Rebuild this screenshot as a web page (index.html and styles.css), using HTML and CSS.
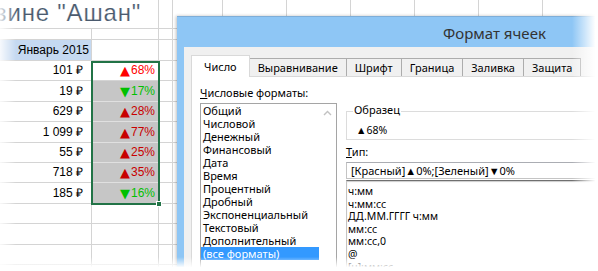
FILE: index.html
```html
<!DOCTYPE html>
<html lang="ru">
<head>
<meta charset="utf-8">
<title>Формат ячеек</title>
<link rel="stylesheet" href="styles.css">
</head>
<body>
<div class="page">
  <div class="sheet">
    <div class="row r-title">
      <div class="cell ab title"><span>магазине "Ашан"</span></div>
      <div class="cell c"></div><div class="cell d"></div>
      <div class="cell w"></div><div class="cell w"></div><div class="cell w"></div>
      <div class="cell w"></div><div class="cell w"></div><div class="cell w"></div>
    </div>
    <div class="row r-gap"><div class="cell a"></div><div class="cell b"></div><div class="cell c"></div><div class="cell d"></div></div>
    <div class="row r-head"><div class="cell a hdr">Январь 2015</div><div class="cell b"></div><div class="cell c"></div><div class="cell d"></div></div>
    <div class="row"><div class="cell a">101 ₽</div><div class="cell b up"><span class="tri">▲</span>68%</div><div class="cell c"></div><div class="cell d"></div></div>
    <div class="row"><div class="cell a">19 ₽</div><div class="cell b hl dn"><span class="tri">▼</span>17%</div><div class="cell c"></div><div class="cell d"></div></div>
    <div class="row"><div class="cell a">629 ₽</div><div class="cell b hl up"><span class="tri">▲</span>28%</div><div class="cell c"></div><div class="cell d"></div></div>
    <div class="row"><div class="cell a">1 099 ₽</div><div class="cell b hl up"><span class="tri">▲</span>77%</div><div class="cell c"></div><div class="cell d"></div></div>
    <div class="row"><div class="cell a">55 ₽</div><div class="cell b hl up"><span class="tri">▲</span>25%</div><div class="cell c"></div><div class="cell d"></div></div>
    <div class="row"><div class="cell a">718 ₽</div><div class="cell b hl up"><span class="tri">▲</span>35%</div><div class="cell c"></div><div class="cell d"></div></div>
    <div class="row"><div class="cell a">185 ₽</div><div class="cell b hl dn"><span class="tri">▼</span>16%</div><div class="cell c"></div><div class="cell d"></div></div>
    <div class="row"><div class="cell a"></div><div class="cell b"></div><div class="cell c"></div><div class="cell d"></div></div>
    <div class="row"><div class="cell a"></div><div class="cell b"></div><div class="cell c"></div><div class="cell d"></div></div>
    <div class="row"><div class="cell a"></div><div class="cell b"></div><div class="cell c"></div><div class="cell d"></div></div>
    <div class="row"><div class="cell a"></div><div class="cell b"></div><div class="cell c"></div><div class="cell d"></div></div>
  </div>

  <div class="selbox"><span class="handle"></span></div>

  <div class="dialog">
    <div class="titlebar">Формат ячеек</div>
    <div class="dbody">
      <div class="tabs">
        <div class="tab on">Число</div>
        <div class="tab">Выравнивание</div>
        <div class="tab">Шрифт</div>
        <div class="tab">Граница</div>
        <div class="tab">Заливка</div>
        <div class="tab">Защита</div>
      </div>
      <div class="panel">
        <div class="fmts">
          <div class="lbl"><u>Ч</u>исловые форматы:</div>
          <div class="list">
            <div class="items">
              <div>Общий</div>
              <div>Числовой</div>
              <div>Денежный</div>
              <div>Финансовый</div>
              <div>Дата</div>
              <div>Время</div>
              <div>Процентный</div>
              <div>Дробный</div>
              <div>Экспоненциальный</div>
              <div>Текстовый</div>
              <div>Дополнительный</div>
              <div class="sel">(все форматы)</div>
            </div>
            <div class="scroll">
              <svg width="9" height="6" viewBox="0 0 9 6"><polyline points="1,5 4.5,1.5 8,5" fill="none" stroke="#c2c2c2" stroke-width="1.4"/></svg>
            </div>
          </div>
        </div>
        <div class="rt">
          <div class="sample">
            <span class="legend">Образец</span>
            <div class="sval">▲68%</div>
          </div>
          <div class="lbl2"><u>Т</u>ип:</div>
          <div class="input">[Красный]▲0%;[Зеленый]▼0%</div>
          <div class="types">
            <div>ч:мм</div>
            <div>ч:мм:сс</div>
            <div>ДД.ММ.ГГГГ ч:мм</div>
            <div>мм:сс</div>
            <div>мм:сс,0</div>
            <div>@</div>
            <div>[ч]:мм:сс</div>
          </div>
        </div>
      </div>
    </div>
  </div>

  <div class="fade fade-l"></div>
  <div class="fade fade-r"></div>
  <div class="fade fade-b"></div>
</div>
</body>
</html>
```

FILE: styles.css
```css
* { box-sizing: border-box; margin: 0; padding: 0; }
html, body { width: 598px; height: 271px; overflow: hidden; background: #fff; }
.page { position: relative; width: 598px; height: 271px; overflow: hidden; }

.sheet { font-family: "Liberation Sans", Arial, sans-serif; font-size: 12px; color: #000; }
.row { display: flex; height: 20.4px; }
.cell {
  flex: none;
  border-right: 1px solid #d4d4d4;
  border-bottom: 1px solid #d4d4d4;
  display: flex;
  align-items: flex-end;
  justify-content: flex-end;
  padding-bottom: 2px;
  line-height: 15px;
  white-space: nowrap;
}
.a { width: 92px; padding-right: 8px; }
.b { width: 67px; padding-right: 3px; }
.c { width: 14px; }
.d { width: 50px; }
.w { width: 64px; }
.ab { width: 159px; }
.r-title { height: 29px; }
.title {
  font-size: 24px;
  letter-spacing: 0.8px;
  color: #4a5a6e;
  line-height: 26px;
  align-items: flex-start;
  padding: 0 17px 0 0;
  overflow: hidden;
  -webkit-text-stroke: 0.2px #fff;
}
.r-gap { height: 11px; }
.r-head { height: 21px; }
.hdr { background: #c5d9f1; padding-right: 2px; }
.hl { background: #c6c6c6; border-bottom-color: #e0e0e0; }
.tri { font-family: "DejaVu Sans", sans-serif; font-size: 13px; line-height: 15px; margin-right: 1px; }
.up { color: #ff0000; }
.hl.up { color: #c80000; }
.hl.dn { color: #00c000; }

.selbox {
  position: absolute;
  left: 91px; top: 61px;
  width: 69px; height: 144px;
  border: 2px solid #217346;
}
.handle {
  position: absolute;
  right: -4px; bottom: -4px;
  width: 6px; height: 6px;
  background: #217346;
  border: 1px solid #fff;
}

.dialog {
  position: absolute;
  left: 177px; top: 16px;
  width: 450px; height: 270px;
  background: #8ec6f5;
  border-top: 1px solid #7eaed8;
  box-shadow: -1px 0 3px rgba(0,0,0,.25);
  font-family: "Noto Sans", "Open Sans", sans-serif;
  font-size: 11px;
  color: #000;
  display: flex;
  flex-direction: column;
}
.titlebar {
  height: 30px;
  flex: none;
  padding: 2px 0 0 266px;
  display: flex;
  align-items: center;
  font-size: 15px;
  color: #333;
}
.dbody {
  flex: 1;
  margin-left: 7px;
  background: #f0f0f0;
  padding: 8px 0 0 7px;
  display: flex;
  flex-direction: column;
}
.tabs { display: flex; align-items: flex-end; height: 21px; flex: none; }
.tab {
  height: 18px;
  padding: 0 8px;
  border: 1px solid #acacac;
  border-bottom: 0;
  margin-right: -1px;
  background: #f0f0f0;
  display: flex;
  align-items: center;
  line-height: 16px;
  white-space: nowrap;
}
.tab.on {
  height: 22px;
  margin-bottom: -1px;
  padding: 1px 12px 0;
  background: #fff;
  border-color: #d9d9d9;
  position: relative;
  z-index: 1;
}
.panel {
  flex: 1;
  background: #fff;
  border: 1px solid #d9d9d9;
  display: flex;
  gap: 9px;
  padding: 8px 0 0 8px;
}
.fmts { width: 137px; flex: none; display: flex; flex-direction: column; }
.lbl { line-height: 16px; height: 16px; }
.list { margin-top: 2px; border: 1px solid #a5a5a5; display: flex; flex: 1; }
.items { flex: 1; }
.items div { line-height: 13px; padding-left: 2px; white-space: nowrap; }
.items .sel { background: #3399ff; color: #fff; }
.scroll { width: 17px; flex: none; display: flex; justify-content: center; align-items: flex-start; padding-top: 6px; }

.rt { flex: 1; display: flex; flex-direction: column; }
.sample { margin-top: 26px; height: 29px; border: 1px solid #dcdcdc; border-right: 0; flex: none; }
.legend {
  display: block;
  width: max-content;
  margin: -10px 0 0 6px;
  padding: 0 1px;
  background: #fff;
  line-height: 16px;
}
.sval { line-height: 14px; margin-top: 5px; padding-left: 9px; font-size: 10.5px; }
.lbl2 { margin-top: 4px; line-height: 16px; }
.input {
  margin-top: 2px;
  height: 17px;
  border: 1px solid #c4c4c4;
  border-top-color: #abadb3;
  border-right: 0;
  padding-left: 4px;
  line-height: 15px;
  white-space: nowrap;
  flex: none;
}
.types {
  margin-top: 1px;
  flex: 1;
  border-top: 1px solid #6f6f6f;
  border-left: 1px solid #c4c4c4;
  box-shadow: inset 0 1px 1px rgba(0,0,0,.2);
  padding: 4px 0 0 1px;
  font-size: 10.5px;
}
.types div { line-height: 12.6px; white-space: nowrap; }

.fade { position: absolute; pointer-events: none; }
.fade-l { left: 0; top: 0; width: 16px; height: 100%; background: linear-gradient(to right, rgba(255,255,255,.85), rgba(255,255,255,0)); }
.fade-r { right: 0; top: 0; width: 26px; height: 100%; background: linear-gradient(to right, rgba(255,255,255,0), #fff 90%); }
.fade-b { left: 0; bottom: 0; width: 100%; height: 14px; background: linear-gradient(to bottom, rgba(255,255,255,0), #fff 75%); }
```
